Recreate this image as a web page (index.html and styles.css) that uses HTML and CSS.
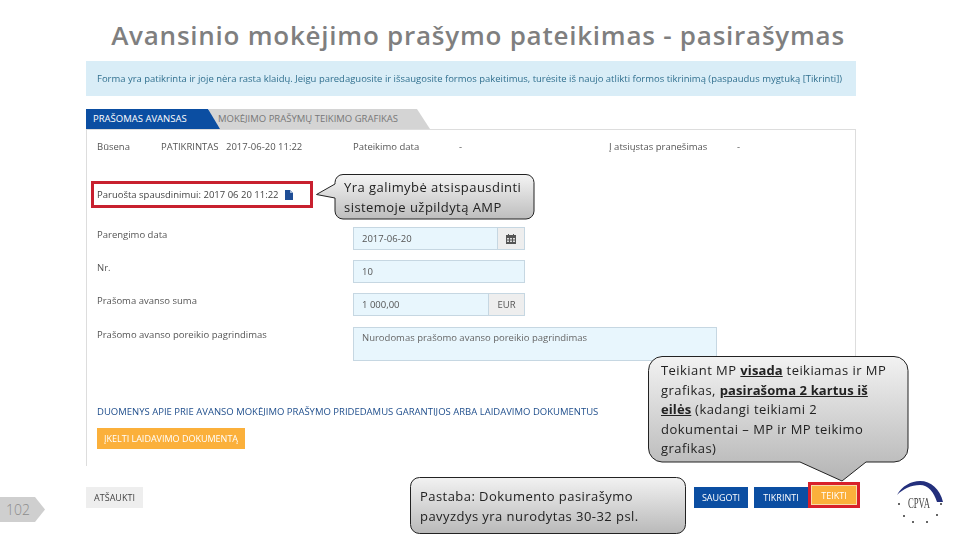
FILE: index.html
```html
<!DOCTYPE html>
<html>
<head>
    <title>Avansinio mokėjimo prašymo pateikimas</title>
    <meta charset="utf-8" />
    <link rel="stylesheet" href="styles.css">
</head>
<body>
    <div class="slide">
        <h1 class="slide-title">Avansinio mokėjimo prašymo pateikimas - pasirašymas</h1>

        <div class="shot">
            <div class="alert">Forma yra patikrinta ir joje nėra rasta klaidų. Jeigu paredaguosite ir išsaugosite formos pakeitimus, turėsite iš naujo atlikti formos tikrinimą (paspaudus mygtuką [Tikrinti])</div>

            <div class="tabs">
                <div class="tab tab-active">PRAŠOMAS AVANSAS</div>
                <div class="tab tab-other">MOKĖJIMO PRAŠYMŲ TEIKIMO GRAFIKAS</div>
            </div>

            <div class="panel">
                <div class="panel-top">
                    <div class="status-row">
                        <span class="st-a">Būsena</span>
                        <span class="st-b">PATIKRINTAS</span>
                        <span class="st-c">2017-06-20 11:22</span>
                        <span class="st-d">Pateikimo data</span>
                        <span class="st-e">-</span>
                        <span class="st-f">Į atsiųstas pranešimas</span>
                        <span>-</span>
                    </div>

                    <div class="print-box">
                        Paruošta spausdinimui: 2017 06 20 11:22
                        <svg class="doc-icon" width="8" height="10" viewBox="0 0 8 10"><path d="M0 0h5l3 3v7H0z" fill="#1f4e96"/><path d="M5 0v3h3z" fill="#9db6d8"/></svg>
                    </div>

                    <div class="form-row">
                        <label>Parengimo data</label>
                        <div class="field">
                            <div class="value">2017-06-20</div>
                            <div class="addon addon-cal">
                                <svg width="10" height="10" viewBox="0 0 10 10"><path d="M0 1h10v9H0z" fill="#555"/><path d="M2 0h1v2H2zM7 0h1v2H7z" fill="#555"/><path d="M1 4h2v1.500H1zM4 4h2v1.500H4zM7 4h2v1.500H7zM1 6.500h2V8H1zM4 6.500h2V8H4zM7 6.500h2V8H7z" fill="#ddd"/></svg>
                            </div>
                        </div>
                    </div>
                    <div class="form-row">
                        <label>Nr.</label>
                        <div class="field"><div class="value">10</div></div>
                    </div>
                    <div class="form-row">
                        <label>Prašoma avanso suma</label>
                        <div class="field">
                            <div class="value">1 000,00</div>
                            <div class="addon addon-eur">EUR</div>
                        </div>
                    </div>
                    <div class="form-row form-row-last">
                        <label>Prašomo avanso poreikio pagrindimas</label>
                        <div class="textarea">Nurodomas prašomo avanso poreikio pagrindimas</div>
                    </div>
                </div>

                <div class="docs">
                    <div class="docs-title">DUOMENYS APIE PRIE AVANSO MOKĖJIMO PRAŠYMO PRIDEDAMUS GARANTIJOS ARBA LAIDAVIMO DOKUMENTUS</div>
                    <div class="btn btn-upload">ĮKELTI LAIDAVIMO DOKUMENTĄ</div>
                </div>
            </div>

            <div class="actions">
                <div class="btn btn-cancel">ATŠAUKTI</div>
                <div class="actions-right">
                    <div class="btn btn-blue">SAUGOTI</div>
                    <div class="btn btn-blue">TIKRINTI</div>
                    <div class="submit-box"><div class="btn btn-submit">TEIKTI</div></div>
                </div>
            </div>
        </div>

        <!-- callouts over the screenshot -->
        <div class="callout callout-print">
            <svg class="bubble" width="220" height="48" viewBox="0 0 220 48">
                <defs><linearGradient id="grad1" x1="0" y1="0" x2="0" y2="1"><stop offset="0" stop-color="#f4f4f4"/><stop offset="1" stop-color="#bdbdbd"/></linearGradient></defs>
                <path d="M27 .5H210a8 8 0 0 1 8 8V37a8 8 0 0 1-8 8H27a8 8 0 0 1-8-8V24L.5 20.500 19 10V8.500a8 8 0 0 1 8-8z" fill="url(#grad1)" stroke="#222"/>
            </svg>
            <div class="callout-text">Yra galimybė atsispausdinti<br>sistemoje užpildytą AMP</div>
        </div>

        <div class="callout callout-note">
            <svg class="bubble" width="276" height="57" viewBox="0 0 276 57">
                <defs><linearGradient id="grad2" x1="0" y1="0" x2="0" y2="1"><stop offset="0" stop-color="#f2f2f2"/><stop offset="1" stop-color="#b9b9b9"/></linearGradient></defs>
                <rect x=".5" y=".5" width="275" height="56" rx="9" fill="url(#grad2)" stroke="#222"/>
            </svg>
            <div class="callout-text">Pastaba: Dokumento pasirašymo<br>pavyzdys yra nurodytas 30-32 psl.</div>
        </div>

        <div class="callout callout-mp">
            <svg class="bubble" width="262" height="127" viewBox="0 0 262 127">
                <defs><linearGradient id="grad3" x1="0" y1="0" x2="0" y2="1"><stop offset="0" stop-color="#f2f2f2"/><stop offset="1" stop-color="#b4b4b4"/></linearGradient></defs>
                <path d="M14 .5H246a14 14 0 0 1 14 14V92a14 14 0 0 1-14 14H218L194 125 152 106H14A14 14 0 0 1 .5 92V14.500A14 14 0 0 1 14 .5z" fill="url(#grad3)" stroke="#222"/>
            </svg>
            <div class="callout-text">Teikiant MP <b><u>visada</u></b> teikiamas ir MP<br>grafikas, <b><u>pasirašoma 2 kartus iš<br>eilės</u></b> (kadangi teikiami 2<br>dokumentai – MP ir MP teikimo<br>grafikas)</div>
        </div>

        <div class="page-badge">102</div>

        <div class="logo">
            <svg width="50" height="46" viewBox="0 0 50 46">
                <path d="M0 15C5 6 14 1 23 1 34 1 43 9 46 22H40C37 12 31 5 23 5 14 5 6 9 0 15z" fill="#232f7c"/>
                <g fill="#333">
                    <circle cx="2" cy="24" r="1"/><circle cx="44" cy="24" r="1"/>
                    <circle cx="7" cy="36" r="1"/><circle cx="40" cy="35" r="1"/>
                    <circle cx="16" cy="42" r="1"/><circle cx="30" cy="42" r="1"/>
                </g>
                <text x="11" y="28" class="logo-text" textLength="22" lengthAdjust="spacingAndGlyphs">CPVA</text>
            </svg>
        </div>
    </div>
</body>
</html>
```

FILE: styles.css
```css
html,body {
    height: 100%;
    margin: 0;
    background-color: #ffffff;
    font-family: "Open Sans", "Noto Sans", sans-serif;
}

.slide {
    position: relative;
    width: 960px;
    height: 540px;
    overflow: hidden;
}

.slide-title {
    height: 61px;
    margin: 0;
    padding: 17px 4px 0 0;
    box-sizing: border-box;
    font-size: 26px;
    line-height: 36px;
    font-weight: 600;
    letter-spacing: 0.76px;
    text-align: center;
    color: #7f7f7f;
}

.shot {
    width: 770px;
    margin-left: 86px;
    color: #555;
    font-size: 9.500px;
    filter: blur(0.3px);
}

.alert {
    height: 35px;
    padding-left: 11px;
    line-height: 36px;
    background-color: #d9edf7;
    color: #31708f;
    font-size: 9.470px;
    white-space: nowrap;
}

/* tabs */
.tabs {
    display: flex;
    height: 20px;
    margin-top: 13px;
}

.tab {
    height: 20px;
    line-height: 20px;
    font-size: 9.500px;
    white-space: nowrap;
}

.tab-active {
    position: relative;
    z-index: 1;
    width: 134px;
    padding-left: 7px;
    box-sizing: border-box;
    background-color: #0b4ea2;
    color: #ffffff;
    clip-path: polygon(0 0, 122px 0, 134px 100%, 0 100%);
}

.tab-other {
    width: 221px;
    margin-left: -11px;
    padding-left: 9px;
    box-sizing: border-box;
    background-color: #d4d4d4;
    color: #777;
    clip-path: polygon(0 0, 208px 0, 221px 100%, 0 100%);
}

/* form panel */
.panel {
    height: 336px;
    border-left: 1px solid #dddddd;
    border-top: 1px solid #dddddd;
}

.panel-top {
    height: 233px;
    padding: 10px 0 0 10px;
    box-sizing: border-box;
    border-right: 1px solid #dddddd;
}

.status-row {
    display: flex;
    height: 14px;
    line-height: 14px;
    white-space: nowrap;
}

.st-a { width: 64px; }
.st-b { width: 65px; }
.st-c { width: 127px; }
.st-d { width: 106px; }
.st-e { width: 150px; }
.st-f { width: 128px; }

.print-box {
    display: flex;
    align-items: center;
    gap: 6px;
    width: 222px;
    height: 27px;
    margin: 27px 0 0 -6px;
    padding-left: 3px;
    box-sizing: border-box;
    border: 3px solid #c8202f;
    white-space: nowrap;
    color: #444;
}

.form-row {
    display: flex;
    height: 23px;
    margin-bottom: 10px;
}

.print-box + .form-row {
    margin-top: 19px;
}

.form-row label {
    width: 256px;
    line-height: 15px;
}

.field {
    display: flex;
    width: 172px;
    height: 23px;
    box-sizing: border-box;
    border: 1px solid #c6d7e2;
}

.value {
    flex: 1;
    padding-left: 8px;
    line-height: 21px;
    background-color: #e8f6fd;
}

.addon {
    display: flex;
    align-items: center;
    justify-content: center;
    background-color: #eeeeee;
    border-left: 1px solid #c6d7e2;
}

.addon-cal { width: 26px; }
.addon-eur { width: 35px; }

.form-row-last {
    height: 34px;
    margin-top: 11px;
    margin-bottom: 0;
}

.textarea {
    width: 364px;
    height: 34px;
    box-sizing: border-box;
    padding: 3px 8px;
    line-height: 14px;
    border: 1px solid #c6d7e2;
    background-color: #e8f6fd;
    color: #666;
}

.docs {
    padding: 42px 0 0 10px;
}

.docs-title {
    color: #1f4e8c;
    font-size: 9.500px;
    line-height: 14px;
    white-space: nowrap;
}

.btn {
    display: flex;
    align-items: center;
    justify-content: center;
    box-sizing: border-box;
    font-size: 9px;
    white-space: nowrap;
}

.btn-upload {
    width: 148px;
    height: 21px;
    margin-top: 9px;
    background-color: #fbb03b;
    color: #ffffff;
}

/* bottom buttons */
.actions {
    display: flex;
    justify-content: space-between;
    align-items: flex-end;
    width: 774px;
    height: 42px;
}

.btn-cancel {
    width: 57px;
    height: 21px;
    background-color: #eeeeee;
    color: #444;
}

.actions-right {
    display: flex;
    align-items: flex-end;
}

.btn-blue {
    width: 54px;
    height: 21px;
    margin-right: 6px;
    background-color: #0b4ea2;
    color: #ffffff;
}

.btn-blue + .btn-blue {
    margin-right: 0;
}

.submit-box {
    width: 52px;
    height: 26px;
    padding: 3px;
    box-sizing: border-box;
    background-color: #d8202a;
}

.btn-submit {
    width: 100%;
    height: 100%;
    border: 1px solid #f6dca8;
    background-color: #fbb03b;
    color: #ffffff;
}

/* callouts */
.callout {
    position: absolute;
    color: #222;
}

.bubble {
    position: absolute;
    left: 0;
    top: 0;
}

.callout-text {
    position: relative;
    white-space: nowrap;
    font-size: 13px;
    line-height: 19.500px;
    letter-spacing: 0.45px;
}

.callout-print {
    left: 316px;
    top: 174px;
    width: 220px;
    height: 48px;
}

.callout-print .callout-text {
    padding: 4px 0 0 28px;
}

.callout-note {
    left: 410px;
    top: 477px;
    width: 276px;
    height: 57px;
}

.callout-note .callout-text {
    padding: 10px 0 0 10px;
}

.callout-mp {
    left: 648px;
    top: 356px;
    width: 262px;
    height: 127px;
}

.callout-mp .callout-text {
    padding: 5px 0 0 13px;
}

.callout-mp b {
    letter-spacing: 0.1px;
}

.page-badge {
    position: absolute;
    left: 0;
    top: 497px;
    width: 45px;
    height: 25px;
    padding-left: 6px;
    box-sizing: border-box;
    line-height: 26px;
    font-size: 14px;
    font-weight: 300;
    background-color: #cfcfcf;
    color: #8c8c8c;
    clip-path: polygon(0 0, 35px 0, 45px 50%, 35px 100%, 0 100%);
}

.logo {
    position: absolute;
    left: 897px;
    top: 480px;
}

.logo-text {
    font-family: "Liberation Serif", serif;
    font-size: 15px;
    fill: #444;
}
```
